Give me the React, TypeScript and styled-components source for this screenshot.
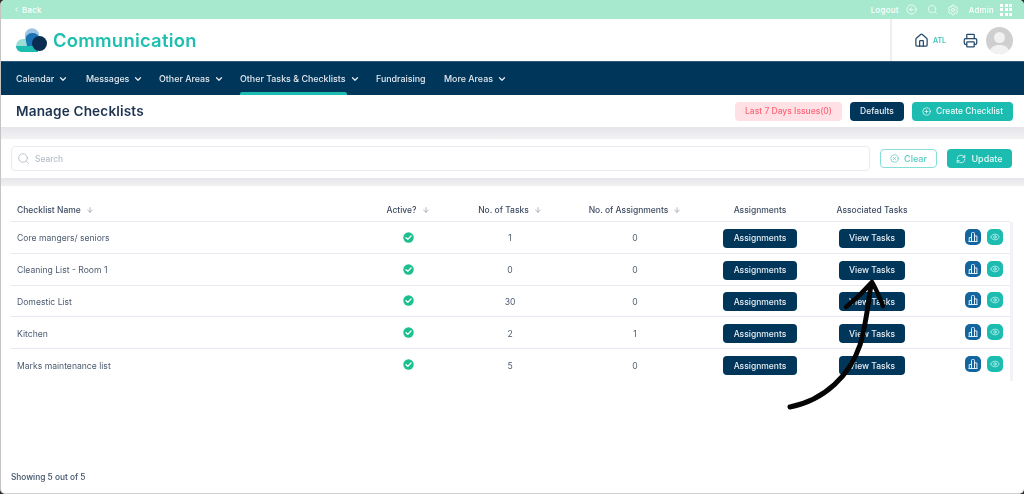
import React from "react";
import styled, { createGlobalStyle } from "styled-components";
import {
  ArrowDown, ChevronDown, ChevronLeft, CircleArrowLeft, CirclePlus, CircleX, Eye, Home, Printer, RefreshCw, Search, Settings,
} from "lucide-react";

const Global = createGlobalStyle`
  html, body { margin: 0; padding: 0; background: #2a2a2a; }
  body { width: 1024px; height: 494px; overflow: hidden; font-family: Inter, "Noto Sans", "Liberation Sans", sans-serif; }
  * { box-sizing: border-box; }
`;

const Page = styled.div`
  position: relative; width: 1024px; height: 494px; background: #fff; overflow: hidden;
  border-radius: 5px; border-left: 1px solid #c4c4c4; border-bottom: 1px solid #d0d0d0;
  display: flex; flex-direction: column; filter: blur(0.35px);
`;
const TopBar = styled.div`
  height: 19px; flex: none; background: #a7e9cf; color: #fff; font-size: 7.8px; font-weight: 500;
  display: flex; align-items: center; padding: 0 12px;
`;
const BackLink = styled.span`display: flex; align-items: center; gap: 2px; letter-spacing: .3px;`;
const TopRight = styled.div`margin-left: auto; display: flex; align-items: center;`;
const TopLabel = styled.span<{ $mr: number }>`margin-right: ${p => p.$mr}px; letter-spacing: .3px;`;
const TopIcon = styled.span<{ $mr: number }>`display: flex; margin-right: ${p => p.$mr}px;`;
const Waffle = styled.div`
  display: grid; grid-template-columns: repeat(3, 3px); grid-auto-rows: 3px; gap: 1.5px;
`;
const WaffleDot = styled.i`background: #fff; display: block;`;

const Header = styled.div`
  height: 42px; flex: none; display: flex; align-items: center; padding-left: 15px; position: relative;
`;
const Brand = styled.div`color: #1fbfb0; font-size: 18.4px; font-weight: 600; margin-left: 6px; letter-spacing: .25px;`;
const HeaderTools = styled.div`
  margin-left: auto; height: 42px; width: 134px; border-left: 2px solid #eceef4; display: flex; align-items: center; padding-left: 22px; color: #254a6b;
`;
const Atl = styled.span`color: #45c4ba; font-size: 7px; font-weight: 600; margin: 0 16px 0 4px; width: 14px;`;
const Avatar = styled.svg`margin-left: 8px; border-radius: 50%; flex: none;`;

const Nav = styled.div`
  height: 34px; flex: none; background: #00365a; color: #e3e9ef; font-size: 8.9px; font-weight: 500; display: flex; padding-left: 15px; border-top: 1px solid #2b5878;
`;
const NavItem = styled.div<{ $active?: boolean; $w: number }>`
  position: relative; width: ${p => p.$w}px; display: flex; align-items: center; gap: 4px; white-space: nowrap; height: 100%;
  ${p => p.$active && `&::after { content: ""; position: absolute; left: 0; width: 107px; bottom: 0; height: 3px; background: #1cbcb0; border-radius: 2px 2px 0 0; }`}
`;

const TitleRow = styled.div`
  height: 32px; flex: none; display: flex; align-items: center; padding: 0 11px 0 15px;
`;
const Title = styled.h1`margin: 0; color: #1d3350; font-size: 13.6px; font-weight: 600; letter-spacing: .15px;`;
const Actions = styled.div`margin-left: auto; display: flex; gap: 8px; align-items: center;`;
const Btn = styled.div<{ $kind: "navy" | "teal" | "pink" | "ghost"; $w: number; $fs?: number }>`
  width: ${p => p.$w}px; height: 19px; border-radius: 4px; display: flex; align-items: center; justify-content: center; gap: 5px;
  font-size: ${p => p.$fs ?? 8.5}px; font-weight: 500; white-space: nowrap;
  background: ${p => ({ navy: "#00365a", teal: "#1cbcb0", pink: "#ffe1e5", ghost: "#fff" }[p.$kind])};
  color: ${p => ({ navy: "#e8eef3", teal: "#e6faf7", pink: "#ff6478", ghost: "#56cdc3" }[p.$kind])};
  border: ${p => p.$kind === "ghost" ? "1px solid #86e0d8" : "none"};
`;
const Band = styled.div<{ $h: number }>`
  height: ${p => p.$h}px; flex: none; background: linear-gradient(#e6e6ea, #f2f2f5);
`;
const SearchRow = styled.div`
  height: 39px; flex: none; display: flex; align-items: center; padding: 0 11px 0 10px;
`;
const SearchBox = styled.div`
  width: 859px; height: 25px; border: 1px solid #e8ebf2; border-radius: 4px; display: flex; align-items: center; padding-left: 5px; gap: 5px;
  color: #b4bcc8; font-size: 8.4px; font-weight: 500;
`;
const SearchActions = styled.div`margin-left: 10px; display: flex; gap: 10px;`;

const Table = styled.div`
  margin: 0 0 0 10px; width: 1002px; border-right: 3px solid #f1f1f6;
`;
const Cols = styled.div<{ $h: number }>`
  height: ${p => p.$h}px; display: grid; grid-template-columns: 347px 100px 104px 146px 104px 120px 78px; align-items: center;
  border-bottom: 1px solid #e8eaf1; color: #4b5b70; font-size: 8.6px; font-weight: 400;
`;
const Row = styled(Cols)`
  &:last-child { border-bottom: none; }
`;
const HeadWrap = styled.div`margin-left: 10px; width: 999px;`;
const HeadCell = styled.div<{ $left?: boolean }>`
  display: flex; align-items: center; gap: 5px; font-weight: 500; color: #3d4c62; font-size: 8.5px; padding-top: 12px;
  justify-content: ${p => p.$left ? "flex-start" : "center"}; padding-left: ${p => p.$left ? 6 : 0}px;
`;
const NameCell = styled.div`padding-left: 6px; padding-top: 2px;`;
const CenterCell = styled.div<{ $up?: boolean }>`display: flex; justify-content: center; align-items: center; padding-top: ${p => p.$up ? 0 : 2}px;`;
const IconCell = styled.div`display: flex; justify-content: flex-end; gap: 6px; padding-right: 7px;`;
const IconBtn = styled.div<{ $teal?: boolean }>`
  width: 16px; height: 16px; border-radius: 5px; display: flex; align-items: center; justify-content: center; color: #dff; margin-top: -1px;
  background: ${p => p.$teal ? "#1cbcb0" : "#12659f"};
`;
const Footer = styled.div`
  margin-top: auto; padding: 0 0 11px 10px; font-size: 8.3px; font-weight: 500; color: #3d5068;
`;
const ArrowLayer = styled.svg`position: absolute; left: -1px; top: 0; pointer-events: none;`;

const rows = [
  ["Core mangers/ seniors", "1", "0"],
  ["Cleaning List - Room 1", "0", "0"],
  ["Domestic List", "30", "0"],
  ["Kitchen", "2", "1"],
  ["Marks maintenance list", "5", "0"],
];

const Sort = () => <ArrowDown size={8} color="#8a94a6" />;

const Check = () => (
  <svg width="11" height="11" viewBox="0 0 11 11">
    <circle cx="5.500" cy="5.500" r="5.200" fill="#1cc08f" />
    <path d="M3 5.700l1.800 1.700L8 4" fill="none" stroke="#fff" strokeWidth="1.300" strokeLinecap="round" strokeLinejoin="round" />
  </svg>
);
const Bars = () => (
  <svg width="10" height="10" viewBox="0 0 10 10" fill="none" stroke="#e2f0fa" strokeWidth="1">
    <path d="M.5 9.500h9M1.200 9.500V5.500h2.300v4M3.500 9.500V1.500a1 1 0 0 1 1-1h1a1 1 0 0 1 1 1v8M6.500 9.500V4h2.400v5.500" />
  </svg>
);
const Logo = () => (
  <svg width="31" height="24" viewBox="0 0 31 24">
    <path d="M6 24a6 6 0 0 1-6-6 7 7 0 0 1 7-7h10v13z" fill="#9adcd6" />
    <path d="M0 18h22v6H6a6 6 0 0 1-6-6z" fill="#1cbcb0" />
    <circle cx="16" cy="7.500" r="7.200" fill="#9cc4e2" />
    <path d="M9.500 10.500A7.200 7.200 0 0 1 23 9l-1 9H11z" fill="#0f6cb0" opacity=".92" />
    <circle cx="23.500" cy="15.500" r="7.500" fill="#0a2c50" />
  </svg>
);

export default function App() {
  return (
    <Page>
      <Global />
      <TopBar>
        <BackLink><ChevronLeft size={7} strokeWidth={3} />Back</BackLink>
        <TopRight>
          <TopLabel $mr={7}>Logout</TopLabel>
          <TopIcon $mr={10}><CircleArrowLeft size={11} strokeWidth={1.6} /></TopIcon>
          <TopIcon $mr={9}><Search size={11} strokeWidth={1.4} /></TopIcon>
          <TopIcon $mr={10}><Settings size={12} strokeWidth={1.6} /></TopIcon>
          <TopLabel $mr={6}>Admin</TopLabel>
          <Waffle>{Array.from({ length: 9 }, (_, i) => <WaffleDot key={i} />)}</Waffle>
        </TopRight>
      </TopBar>
      <Header>
        <Logo />
        <Brand>Communication</Brand>
        <HeaderTools>
          <Home size={15} strokeWidth={2} />
          <Atl>ATL</Atl>
          <Printer size={15} strokeWidth={2} />
          <Avatar width="27" height="27" viewBox="0 0 27 27">
            <rect width="27" height="27" fill="#cfcfcf" />
            <circle cx="13.500" cy="10.500" r="5.500" fill="#f1f1f1" />
            <path d="M3 27c1-7 5-9 10.500-9s9.500 2 10.500 9z" fill="#f1f1f1" />
          </Avatar>
        </HeaderTools>
      </Header>
      <Nav>
        {[["Calendar", 70, true], ["Messages", 73, true], ["Other Areas", 81, true], ["Other Tasks & Checklists", 136, true], ["Fundraising", 68, false], ["More Areas", 70, true]].map(([t, w, c]) => (
          <NavItem key={t as string} $w={w as number} $active={t === "Other Tasks & Checklists"}>
            {t as string}{c ? <ChevronDown size={10} strokeWidth={3} /> : null}
          </NavItem>
        ))}
      </Nav>
      <TitleRow>
        <Title>Manage Checklists</Title>
        <Actions>
          <Btn $kind="pink" $w={107}>Last 7 Days Issues(0)</Btn>
          <Btn $kind="navy" $w={54}>Defaults</Btn>
          <Btn $kind="teal" $w={101}><CirclePlus size={9} />Create Checklist</Btn>
        </Actions>
      </TitleRow>
      <Band $h={12} />
      <SearchRow>
        <SearchBox><Search size={13} strokeWidth={1.3} color="#a8b0bc" />Search</SearchBox>
        <SearchActions>
          <Btn $kind="ghost" $w={57} $fs={9}><CircleX size={9} />Clear</Btn>
          <Btn $kind="teal" $w={65} $fs={9}><RefreshCw size={10} />Update</Btn>
        </SearchActions>
      </SearchRow>
      <Band $h={8} />
      <HeadWrap>
        <Cols $h={36}>
          <HeadCell $left>Checklist Name <Sort /></HeadCell>
          <HeadCell>Active? <Sort /></HeadCell>
          <HeadCell>No. of Tasks <Sort /></HeadCell>
          <HeadCell>No. of Assignments <Sort /></HeadCell>
          <HeadCell>Assignments</HeadCell>
          <HeadCell>Associated Tasks</HeadCell>
          <div />
        </Cols>
      </HeadWrap>
      <Table>
        {rows.map(([name, tasks, assigns]) => (
          <Row $h={31.75} key={name}>
            <NameCell>{name}</NameCell>
            <CenterCell $up><Check /></CenterCell>
            <CenterCell>{tasks}</CenterCell>
            <CenterCell>{assigns}</CenterCell>
            <CenterCell><Btn $kind="navy" $w={74}>Assignments</Btn></CenterCell>
            <CenterCell><Btn $kind="navy" $w={66}>View Tasks</Btn></CenterCell>
            <IconCell>
              <IconBtn><Bars /></IconBtn>
              <IconBtn $teal><Eye size={10} strokeWidth={1.6} /></IconBtn>
            </IconCell>
          </Row>
        ))}
      </Table>
      <Footer>Showing 5 out of 5</Footer>
      <ArrowLayer width="1024" height="494" viewBox="0 0 1024 494" fill="none" stroke="#050505" strokeLinecap="round" strokeLinejoin="round">
        <path d="M790 407C825 400 850 375 860 345C866 325 868 305 871 285" strokeWidth="5" />
        <path d="M846 307C856 299 865 290 872 282C876 289 880 298 883 306" strokeWidth="4.500" />
      </ArrowLayer>
    </Page>
  );
}
